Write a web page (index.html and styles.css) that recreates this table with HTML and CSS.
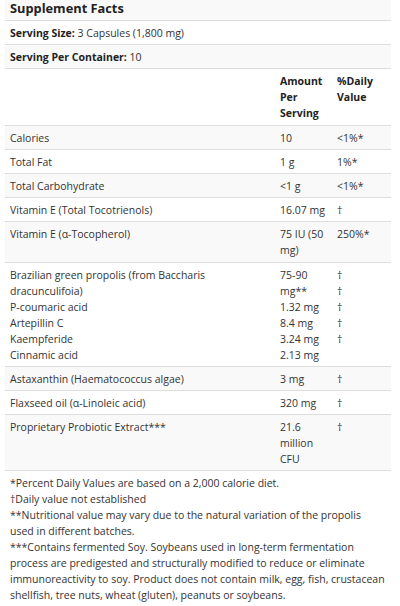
FILE: index.html
```html
<!DOCTYPE html>
<html>
<head>
<meta charset="utf-8">
<link rel="stylesheet" href="styles.css">
</head>
<body>
<div class="wrap">
<table class="facts">
<colgroup><col class="c-name"><col class="c-amt"><col class="c-dv"></colgroup>
<tbody>
<tr class="odd"><td colspan="3" class="title">Supplement Facts</td></tr>
<tr><td colspan="3"><b>Serving Size:</b> 3 Capsules (1,800 mg)</td></tr>
<tr class="odd"><td colspan="3"><b>Serving Per Container:</b> 10</td></tr>
<tr><td></td><td class="hd">Amount Per Serving</td><td class="hd">%Daily Value</td></tr>
<tr class="odd"><td>Calories</td><td>10</td><td>&lt;1%*</td></tr>
<tr><td>Total Fat</td><td>1 g</td><td>1%*</td></tr>
<tr class="odd"><td>Total Carbohydrate</td><td>&lt;1 g</td><td>&lt;1%*</td></tr>
<tr><td>Vitamin E (Total Tocotrienols)</td><td>16.07 mg</td><td>†</td></tr>
<tr class="odd"><td>Vitamin E (α-Tocopherol)</td><td>75 IU (50 mg)</td><td>250%*</td></tr>
<tr><td>Brazilian green propolis (from Baccharis<br>dracunculifoia)<br>P-coumaric acid<br>Artepillin C<br>Kaempferide<br>Cinnamic acid</td><td>75-90<br>mg**<br>1.32 mg<br>8.4 mg<br>3.24 mg<br>2.13 mg</td><td>†<br>†<br>†<br>†<br>†</td></tr>
<tr class="odd"><td>Astaxanthin (Haematococcus algae)</td><td>3 mg</td><td>†</td></tr>
<tr><td>Flaxseed oil (α-Linoleic acid)</td><td>320 mg</td><td>†</td></tr>
<tr class="odd"><td>Proprietary Probiotic Extract***</td><td>21.6<br>million<br>CFU</td><td>†</td></tr>
<tr><td colspan="3" class="notes">*Percent Daily Values are based on a 2,000 calorie diet.<br>†Daily value not established<br>**Nutritional value may vary due to the natural variation of the propolis<br>used in different batches.<br>***Contains fermented Soy. Soybeans used in long-term fermentation<br>process are predigested and structurally modified to reduce or eliminate<br>immunoreactivity to soy. Product does not contain milk, egg, fish, crustacean<br>shellfish, tree nuts, wheat (gluten), peanuts or soybeans.</td></tr>
</tbody>
</table>
</div>
</body>
</html>
```
FILE: styles.css
```css
html, body {
  margin: 0;
  padding: 0;
  background: #fff;
}
.wrap {
  padding: 0 9px 0 5px;
}
.facts {
  width: 386px;
  border-collapse: collapse;
  table-layout: fixed;
  font-family: "Open Sans", "Noto Sans", sans-serif;
  font-size: 10.5px;
  line-height: 16px;
  color: #333;
}
.c-name { width: 270px; }
.c-amt { width: 57px; }
.c-dv { width: 59px; }
.facts td {
  padding: 4px 5px 3.2px 5px;
  vertical-align: top;
  border-bottom: 1px solid #ddd;
  text-align: left;
}
.facts tr.odd td {
  background: #f9f9f9;
}
.facts td.title {
  font-size: 12.8px;
  font-weight: 700;
  color: #222;
  line-height: 17px;
  padding: 0 5px 3px 5px;
}
.facts b, .facts td.hd {
  font-weight: 700;
  color: #222;
}
.facts td.notes {
  padding-bottom: 3.5px;
  white-space: nowrap;
}
```
